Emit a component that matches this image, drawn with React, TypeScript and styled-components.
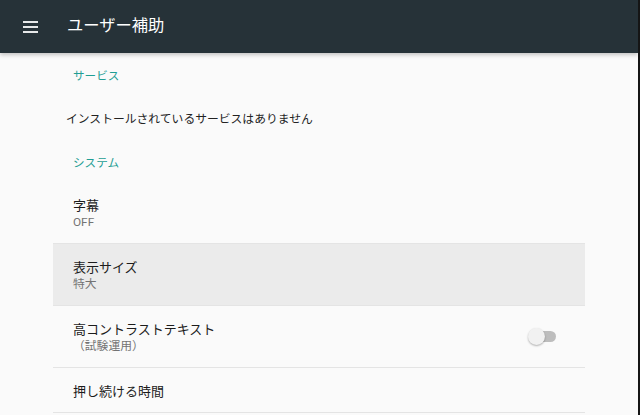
import React from "react";
import styled, { createGlobalStyle } from "styled-components";

const Global = createGlobalStyle`
  html, body { margin: 0; padding: 0; background: #151515; }
  body { font-family: Roboto, "Noto Sans CJK JP", sans-serif; }
`;

const Screen = styled.div`
  width: 638px;
  height: 415px;
  background: #fafafa;
  display: flex;
  flex-direction: column;
  overflow: hidden;
`;

const AppBar = styled.header`
  height: 53px;
  flex-shrink: 0;
  background: #263238;
  display: flex;
  align-items: center;
  padding-left: 23px;
  gap: 29px;
  box-shadow: 0 2px 4px rgba(0, 0, 0, 0.22);
  position: relative;
  z-index: 1;
`;

const Menu = styled.div`
  width: 15px;
  display: flex;
  flex-direction: column;
  gap: 3px;
  & > span {
    display: block;
    height: 2px;
    background: #e6e8e9;
  }
`;

const Title = styled.h1`
  margin: 0;
  font-size: 16.3px;
  font-weight: 400;
  color: #ffffff;
  line-height: 20px;
  padding-bottom: 1px;
`;

const List = styled.div`
  width: 532px;
  margin: 0 auto;
  display: flex;
  flex-direction: column;
`;

const Category = styled.div<{ $tall?: boolean }>`
  height: ${(p) => (p.$tall ? 44 : 41)}px;
  padding-left: 20px;
  display: flex;
  align-items: center;
  font-size: 11.6px;
  color: #1f9e94;
  padding-top: ${(p) => (p.$tall ? 0 : 1)}px;
  box-sizing: border-box;
`;

const InfoRow = styled.div`
  height: 44px;
  padding-left: 13px;
  padding-bottom: 3px;
  box-sizing: border-box;
  display: flex;
  align-items: center;
  font-size: 11.8px;
  color: #222222;
`;

const Row = styled.div<{ $active?: boolean; $h?: number }>`
  height: ${(p) => p.$h ?? 61}px;
  box-sizing: content-box;
  padding: 0 29px 0 20px;
  display: flex;
  align-items: center;
  justify-content: space-between;
  background: ${(p) => (p.$active ? "#ebebeb" : "transparent")};
  border-bottom: 1px solid #e4e4e4;
`;

const Texts = styled.div`
  display: flex;
  flex-direction: column;
  padding-top: 3px;
`;

const RowTitle = styled.div`
  font-size: 13px;
  line-height: 16px;
  color: #1c1c1c;
`;

const RowSummary = styled.div`
  font-size: 11.8px;
  line-height: 16px;
  color: #737373;
`;

const Switch = styled.div`
  position: relative;
  width: 28px;
  height: 17px;
  flex-shrink: 0;
  margin-bottom: 1px;
`;

const Track = styled.div`
  position: absolute;
  left: 1px;
  right: 0;
  top: 3px;
  height: 11px;
  border-radius: 6px;
  background: #bdbdbd;
`;

const Thumb = styled.div`
  position: absolute;
  left: 0;
  top: 0;
  width: 17px;
  height: 17px;
  border-radius: 50%;
  background: #f1f1f1;
  box-shadow: 0 1px 2px rgba(0, 0, 0, 0.3);
`;

export default function App() {
  return (
    <>
      <Global />
      <Screen>
        <AppBar>
          <Menu>
            <span />
            <span />
            <span />
          </Menu>
          <Title>ユーザー補助</Title>
        </AppBar>
        <List>
          <Category $tall>サービス</Category>
          <InfoRow>インストールされているサービスはありません</InfoRow>
          <Category>システム</Category>
          <Row>
            <Texts>
              <RowTitle>字幕</RowTitle>
              <RowSummary>OFF</RowSummary>
            </Texts>
          </Row>
          <Row $active>
            <Texts>
              <RowTitle>表示サイズ</RowTitle>
              <RowSummary>特大</RowSummary>
            </Texts>
          </Row>
          <Row>
            <Texts>
              <RowTitle>高コントラストテキスト</RowTitle>
              <RowSummary>（試験運用）</RowSummary>
            </Texts>
            <Switch>
              <Track />
              <Thumb />
            </Switch>
          </Row>
          <Row $h={44}>
            <Texts>
              <RowTitle>押し続ける時間</RowTitle>
            </Texts>
          </Row>
        </List>
      </Screen>
    </>
  );
}
